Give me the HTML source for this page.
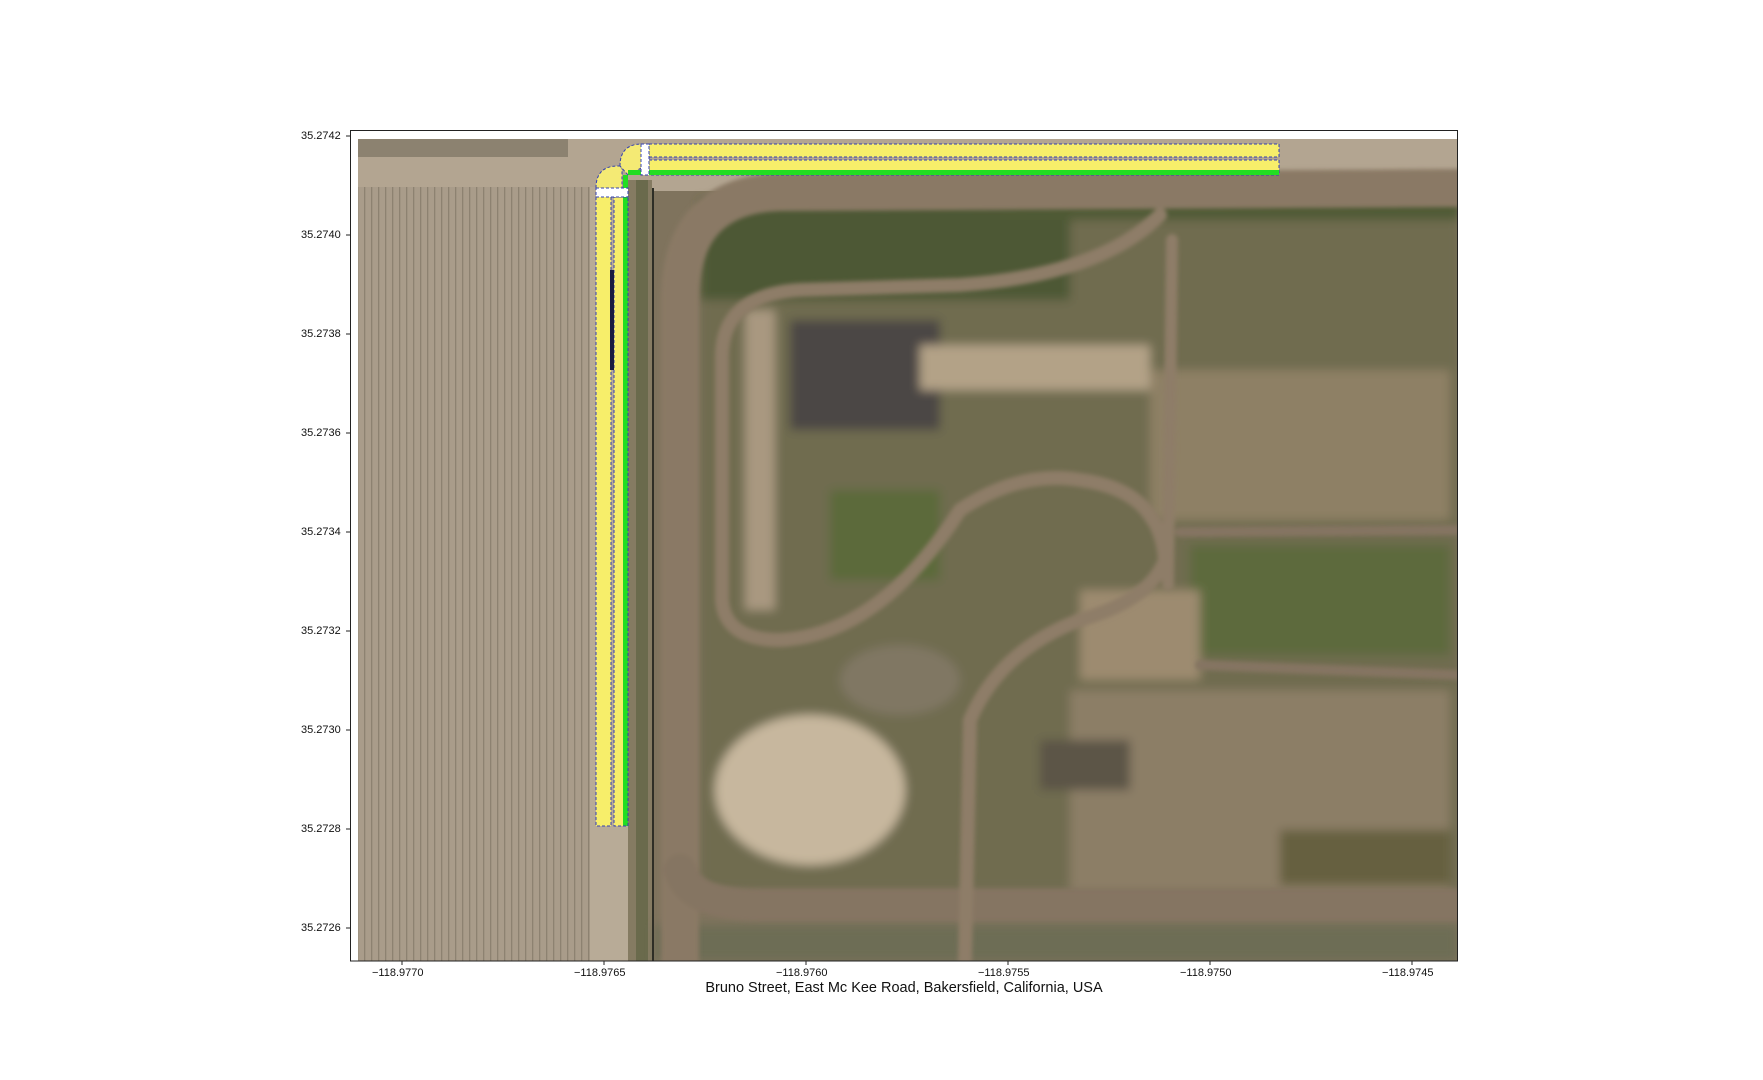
<!DOCTYPE html>
<html><head><style>
html,body{margin:0;padding:0;background:#fff;}
body{width:1763px;height:1080px;position:relative;overflow:hidden;font-family:"Liberation Sans","DejaVu Sans",sans-serif;}
.t{position:absolute;font-size:11px;color:#111;}
</style></head><body>
<svg width="1763" height="1080" style="position:absolute;left:0;top:0">
<defs>
<pattern id="stripes" width="7" height="10" patternUnits="userSpaceOnUse">
<rect width="7" height="10" fill="#a99c8a"/><rect width="1.3" height="10" fill="#8d8271"/>
</pattern>
<filter id="blur"><feGaussianBlur stdDeviation="5"/></filter>
<filter id="blur2"><feGaussianBlur stdDeviation="2"/></filter>
<clipPath id="c"><rect x="358" y="139" width="1100" height="822"/></clipPath>
</defs>
<g clip-path="url(#c)">
<rect x="358" y="139" width="1100" height="822" fill="#7f735d"/>
<rect x="358" y="139" width="1100" height="52" fill="#b3a591"/>
<rect x="358" y="139" width="210" height="18" fill="#8c8270"/>
<rect x="358" y="187" width="232" height="774" fill="url(#stripes)"/>
<rect x="590" y="187" width="40" height="774" fill="#b8ab97"/>
<rect x="628" y="180" width="24" height="781" fill="#857b62"/>
<rect x="636" y="180" width="12" height="781" fill="#6a6a4c"/>
<g filter="url(#blur)">
<rect x="700" y="200" width="760" height="690" fill="#6f6c4f"/>
<rect x="700" y="200" width="370" height="100" fill="#4e5934"/>
<rect x="1000" y="185" width="460" height="35" fill="#4f5a34"/>
<rect x="790" y="320" width="150" height="110" fill="#4b4745"/>
<rect x="920" y="345" width="230" height="45" fill="#b3a287"/>
<rect x="1150" y="370" width="300" height="150" fill="#8e8065"/>
<rect x="745" y="310" width="30" height="300" fill="#a99880"/>
<rect x="1190" y="545" width="260" height="110" fill="#5d6a3c"/>
<rect x="1080" y="590" width="120" height="90" fill="#9d8b70"/>
<rect x="1070" y="690" width="380" height="200" fill="#8c7e66"/>
<ellipse cx="810" cy="790" rx="95" ry="75" fill="#c7b79e"/>
<ellipse cx="900" cy="680" rx="60" ry="35" fill="#807763"/>
<rect x="830" y="490" width="110" height="90" fill="#5c6a3a"/>
<rect x="1280" y="830" width="170" height="55" fill="#66603f"/>
<rect x="655" y="925" width="803" height="36" fill="#6d6d55"/>
<rect x="1040" y="740" width="90" height="50" fill="#5c5547"/>
</g>
<g fill="none" stroke-linecap="round" filter="url(#blur2)">
<path d="M680 961 L680 300 Q680 195 780 192 L1458 188" stroke="#8a7965" stroke-width="38"/>
<path d="M680 870 Q690 905 760 905 L1458 905" stroke="#857462" stroke-width="32"/>
<path d="M1160 215 Q1100 275 960 285 L800 290 Q720 295 722 360 L722 600 Q725 640 780 640 Q880 635 960 510 Q1020 470 1080 480 Q1160 490 1165 560 Q1150 600 1080 620 Q1000 650 970 720 L965 961" stroke="#8e7d68" stroke-width="14"/>
<path d="M1172 240 L1168 585" stroke="#8e7d68" stroke-width="12"/>
<path d="M1180 532 L1458 530" stroke="#857562" stroke-width="10"/>
<path d="M1200 665 L1458 675" stroke="#857562" stroke-width="10"/>
</g>
<line x1="653" y1="188" x2="653" y2="961" stroke="#2e2e26" stroke-width="2"/>
</g>
<rect x="596" y="197" width="15" height="629" fill="#f7ee6a" stroke="#3340b0" stroke-width="1" stroke-dasharray="3,2"/>
<rect x="614" y="197" width="9" height="629" fill="#f7ee6a"/>
<rect x="623" y="175" width="5" height="651" fill="#22dd22"/>
<rect x="614" y="197" width="14" height="629" fill="none" stroke="#3340b0" stroke-width="1" stroke-dasharray="3,2"/>
<rect x="610" y="270" width="4" height="100" fill="#1a1d40"/>
<path d="M596 188 Q596 166 618 166 L622 166 L622 188 Z" fill="#f4ea74" stroke="#3340b0" stroke-dasharray="3,2"/>
<path d="M620 166 Q620 144 642 144 L645 144 L645 166 L628 175 Z" fill="#f4ea74" stroke="#3340b0" stroke-dasharray="3,2"/>
<rect x="596" y="188" width="32" height="9" fill="#fff" stroke="#3340b0" stroke-dasharray="3,2"/>
<rect x="649" y="144" width="630" height="13" fill="#f7ee6a" stroke="#3340b0" stroke-width="1" stroke-dasharray="3,2"/>
<rect x="649" y="160" width="630" height="15" fill="#f7ee6a" stroke="#3340b0" stroke-width="1" stroke-dasharray="3,2"/>
<rect x="628" y="170" width="651" height="5" fill="#22dd22"/>
<rect x="641" y="144" width="8" height="31" fill="#fff" stroke="#3340b0" stroke-dasharray="3,2"/>
<rect x="350.5" y="130.5" width="1107" height="830.5" fill="none" stroke="#222" stroke-width="1"/>
<g stroke="#222">
<line x1="346" y1="136" x2="350" y2="136"/><line x1="346" y1="235" x2="350" y2="235"/><line x1="346" y1="334" x2="350" y2="334"/><line x1="346" y1="433" x2="350" y2="433"/><line x1="346" y1="532" x2="350" y2="532"/><line x1="346" y1="631" x2="350" y2="631"/><line x1="346" y1="730" x2="350" y2="730"/><line x1="346" y1="829" x2="350" y2="829"/><line x1="346" y1="928" x2="350" y2="928"/>
<line x1="402" y1="961" x2="402" y2="965"/><line x1="604" y1="961" x2="604" y2="965"/><line x1="806" y1="961" x2="806" y2="965"/><line x1="1008" y1="961" x2="1008" y2="965"/><line x1="1210" y1="961" x2="1210" y2="965"/><line x1="1412" y1="961" x2="1412" y2="965"/>
</g>
</svg>
<div class="t" style="left:301px;top:130px">35.2742</div>
<div class="t" style="left:301px;top:229px">35.2740</div>
<div class="t" style="left:301px;top:328px">35.2738</div>
<div class="t" style="left:301px;top:427px">35.2736</div>
<div class="t" style="left:301px;top:526px">35.2734</div>
<div class="t" style="left:301px;top:625px">35.2732</div>
<div class="t" style="left:301px;top:724px">35.2730</div>
<div class="t" style="left:301px;top:823px">35.2728</div>
<div class="t" style="left:301px;top:922px">35.2726</div>
<div class="t" style="left:372px;top:967px">−118.9770</div>
<div class="t" style="left:574px;top:967px">−118.9765</div>
<div class="t" style="left:776px;top:967px">−118.9760</div>
<div class="t" style="left:978px;top:967px">−118.9755</div>
<div class="t" style="left:1180px;top:967px">−118.9750</div>
<div class="t" style="left:1382px;top:967px">−118.9745</div>
<div style="position:absolute;left:604px;width:600px;top:980px;text-align:center;font-size:14.5px;color:#111">Bruno Street, East Mc Kee Road, Bakersfield, California, USA</div>
</body></html>
